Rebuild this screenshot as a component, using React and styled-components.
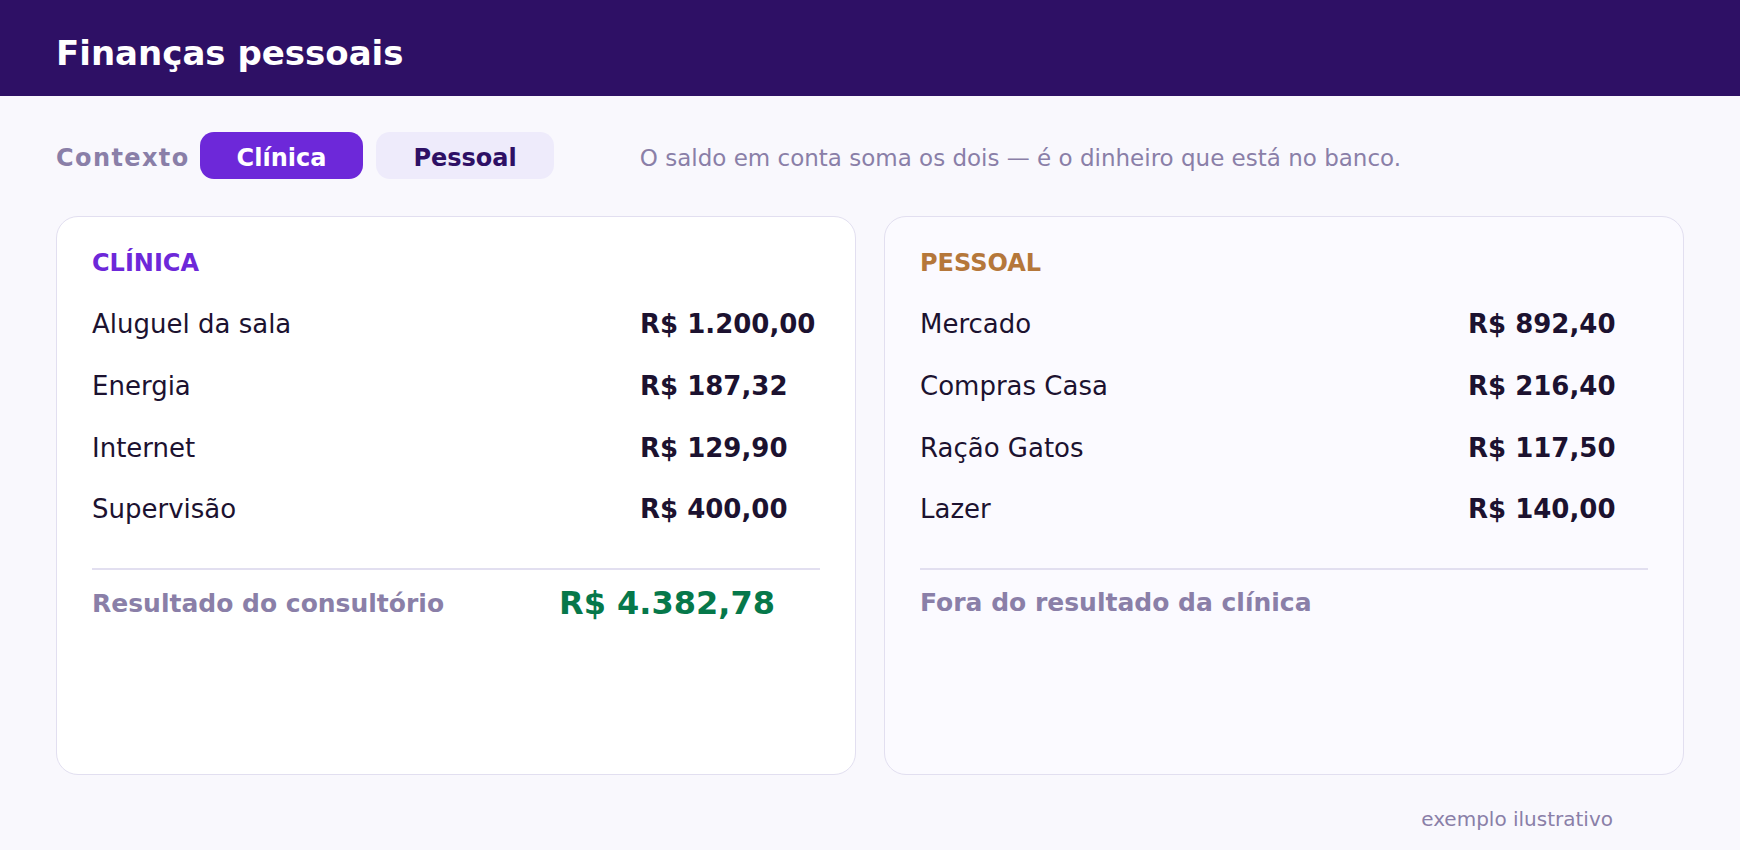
import React from 'react';
import styled, { createGlobalStyle } from 'styled-components';

const GlobalStyle = createGlobalStyle`
  body {
    margin: 0;
    background: #f9f8fd;
    font-family: "DejaVu Sans", "Noto Sans", sans-serif;
    color: #1c1230;
  }
`;

const Page = styled.div`
  min-height: 100vh;
  display: flex;
  flex-direction: column;
`;

const Header = styled.header`
  height: 96px;
  box-sizing: border-box;
  padding: 33px 56px 0;
  background: #2e1065;
`;

const Title = styled.h1`
  margin: 0;
  font-size: 34px;
  font-weight: 700;
  line-height: normal;
  color: #ffffff;
`;

const Main = styled.main`
  flex: 1;
  display: flex;
  flex-direction: column;
  padding: 36px 56px 19px;
`;

const Toolbar = styled.div`
  display: flex;
  align-items: baseline;
  gap: 10px;
`;

const ContextLabel = styled.span`
  font-size: 24px;
  font-weight: 700;
  letter-spacing: 1.4px;
  color: #8a7fa8;
`;

const PillGroup = styled.div`
  display: flex;
  align-items: baseline;
  gap: 13px;
`;

const Pill = styled.button`
  display: inline-flex;
  align-items: center;
  height: 47px;
  box-sizing: border-box;
  padding: 5px 37px 0;
  border: none;
  border-radius: 14px;
  font-family: inherit;
  font-size: 24px;
  font-weight: 700;
  cursor: pointer;
  background: ${p => (p.$active ? '#6d28d9' : '#eeebfb')};
  color: ${p => (p.$active ? '#ffffff' : '#2e1065')};
`;

const Note = styled.span`
  margin-left: 76px;
  font-size: 23px;
  color: #8a7fa8;
`;

const Cards = styled.div`
  flex: 1;
  display: grid;
  grid-template-columns: 1fr 1fr;
  gap: 28px;
  margin-top: 37px;
`;

const Card = styled.section`
  border: 1px solid #e2dff0;
  border-radius: 22px;
  padding: 32px 35px 31px;
  background: ${p => p.$bg};
`;

const CardLabel = styled.div`
  font-size: 24px;
  font-weight: 700;
  color: ${p => p.$color};
  margin-bottom: 17px;
`;

const Row = styled.div`
  display: grid;
  grid-template-columns: 1fr 180px;
  padding: 15px 0;
  font-size: 26px;
  line-height: 31.8px;
`;

const Amount = styled.span`
  font-weight: 700;
`;

const Divider = styled.div`
  height: 2px;
  margin-top: 27px;
  background: #e2dff0;
`;

const ResultRow = styled.div`
  display: grid;
  grid-template-columns: 1fr auto;
  align-items: center;
  min-height: 37px;
  margin-top: 14px;
  padding-right: 45px;
`;

const ResultLabel = styled.span`
  font-size: 25px;
  font-weight: 700;
  color: #8a7fa8;
`;

const ResultValue = styled.span`
  font-size: 32px;
  font-weight: 700;
  color: #06784a;
`;

const Footer = styled.footer`
  margin-top: 32px;
  padding-right: 71px;
  text-align: right;
  font-size: 20px;
  color: #8a7fa8;
`;

const clinica = [
  ['Aluguel da sala', 'R$ 1.200,00'],
  ['Energia', 'R$ 187,32'],
  ['Internet', 'R$ 129,90'],
  ['Supervisão', 'R$ 400,00'],
];

const pessoal = [
  ['Mercado', 'R$ 892,40'],
  ['Compras Casa', 'R$ 216,40'],
  ['Ração Gatos', 'R$ 117,50'],
  ['Lazer', 'R$ 140,00'],
];

function ExpenseCard({ label, color, bg, items, footLabel, total }) {
  return (
    <Card $bg={bg}>
      <CardLabel $color={color}>{label}</CardLabel>
      {items.map(([name, value]) => (
        <Row key={name}>
          <span>{name}</span>
          <Amount>{value}</Amount>
        </Row>
      ))}
      <Divider />
      <ResultRow>
        <ResultLabel>{footLabel}</ResultLabel>
        {total ? <ResultValue>{total}</ResultValue> : null}
      </ResultRow>
    </Card>
  );
}

export default function App() {
  const [ctx, setCtx] = React.useState('clinica');
  return (
    <Page>
      <GlobalStyle />
      <Header>
        <Title>Finanças pessoais</Title>
      </Header>
      <Main>
        <Toolbar>
          <ContextLabel>Contexto</ContextLabel>
          <PillGroup>
            <Pill $active={ctx === 'clinica'} onClick={() => setCtx('clinica')}>Clínica</Pill>
            <Pill $active={ctx === 'pessoal'} onClick={() => setCtx('pessoal')}>Pessoal</Pill>
          </PillGroup>
          <Note>O saldo em conta soma os dois — é o dinheiro que está no banco.</Note>
        </Toolbar>
        <Cards>
          <ExpenseCard
            label="CLÍNICA"
            color="#6d28d9"
            bg="#ffffff"
            items={clinica}
            footLabel="Resultado do consultório"
            total="R$ 4.382,78"
          />
          <ExpenseCard
            label="PESSOAL"
            color="#b5773a"
            bg="#fbfaff"
            items={pessoal}
            footLabel="Fora do resultado da clínica"
          />
        </Cards>
        <Footer>exemplo ilustrativo</Footer>
      </Main>
    </Page>
  );
}
